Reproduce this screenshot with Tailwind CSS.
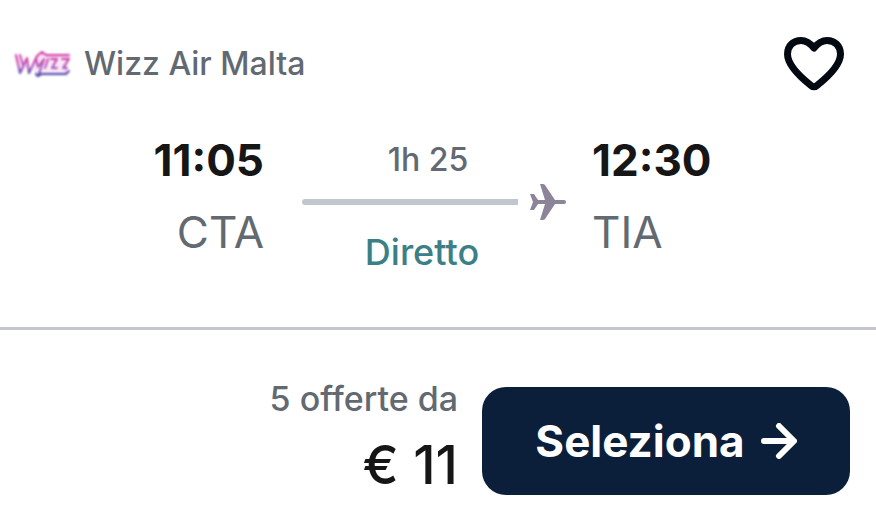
<!DOCTYPE html>
<html lang="it">
	<head>
		<meta charset="utf-8" />
		<title>Wizz Air Malta CTA - TIA</title>
		<meta name="viewport" content="width=device-width, initial-scale=1.0" />
		<script src="https://cdn.jsdelivr.net/npm/@tailwindcss/browser@4"></script>
	</head>
	<body class="bg-white font-['Inter',sans-serif] text-[#161616]">
		<article>
			<header class="flex items-center justify-between pt-8 pl-3 pr-8">
				<div class="flex items-center gap-3">
					<svg class="w-[60px] h-9 blur-[1px]" viewBox="0 0 60 36" fill="none" stroke-linecap="round" stroke-linejoin="round" aria-hidden="true">
						<defs>
							<linearGradient id="wizz" x1="0" y1="5" x2="0" y2="31" gradientUnits="userSpaceOnUse">
								<stop offset="0.3" stop-color="#d03aa8" />
								<stop offset="0.65" stop-color="#a45cc0" />
								<stop offset="0.9" stop-color="#4444ac" />
							</linearGradient>
						</defs>
						<path d="M4 9 8 27l7-9 2 9 9-17 4-3 5 3h22l-4 13 2 2-3 3H29l-3 2-2-3" fill="#fbe9f6" stroke="#f3cbe6" stroke-width="2" />
						<g stroke="url(#wizz)" stroke-width="2">
							<path d="M4 9 8 27l7-15 2 15 8-17M8 9l3 10M26 9l4-3 4 3h23" stroke-width="2" />
							<path d="m24 13 2 8 6-8-5 15M36 13l-3 9M39 13h6l-5 9h5M50 13h7l-6 9h4" />
							<path d="M24 28q2 4 5 0h25l3-3" />
						</g>
					</svg>
					<span class="text-[32px] leading-10 font-medium text-[#626971]">Wizz Air Malta</span>
				</div>
				<button type="button" aria-label="Salva" class="cursor-pointer">
					<svg class="w-[60px] h-16" viewBox="0 0 60 64" fill="none" stroke="#030911" stroke-width="7" stroke-linejoin="round" aria-hidden="true">
						<path d="M30 16C26 11 22 8.500 17 8.500 9 8.500 3.500 14 3.500 22c0 10 9 20 23.500 31.500q3 2.500 6 0C47.500 42 56.500 32 56.500 22 56.500 14 51 8.500 43 8.500c-5 0-9 2.500-13 7.500z" />
					</svg>
				</button>
			</header>

			<section class="grid grid-cols-[1fr_264px_1fr] gap-x-[26px] pt-7 pb-[43px] pl-6 pr-8">
				<div class="text-right pr-3">
					<div class="text-[44px] leading-[72px] font-bold">11:05</div>
					<div class="text-[44px] leading-[72px] text-[#626971]">CTA</div>
				</div>
				<div class="flex flex-col pt-3">
					<div class="text-[32px] leading-[48px] font-medium text-center text-[#626971] pr-3">1h 25</div>
					<div class="flex items-center gap-3">
						<span class="h-1.5 grow rounded-l-full bg-[#c1c7cf]"></span>
						<svg class="size-9" viewBox="0 0 36 36" fill="#8e8499" aria-hidden="true">
							<path d="M10 0h3q1 0 2 1l10 15h9q2 0 2 2t-2 2h-9L15 35q-1 1-2 1h-3l5-16H8l-4 6H0l3-8-3-8h4l4 6h7z" />
						</svg>
					</div>
					<div class="text-[36px] leading-[64px] font-medium text-center text-[#3b8087] pr-6">Diretto</div>
				</div>
				<div>
					<div class="text-[44px] leading-[72px] font-bold">12:30</div>
					<div class="text-[44px] leading-[72px] text-[#626971]">TIA</div>
				</div>
			</section>

			<footer class="flex items-center justify-end gap-6 border-t-[3px] border-[#c4c8cc] pt-[49px] pb-4 pr-[26px]">
				<div class="flex flex-col gap-2 text-right">
					<div class="text-[34px] leading-10 font-medium text-[#626971]">5 offerte da</div>
					<div class="text-[54px] leading-[76px] font-medium">€ 11</div>
				</div>
				<button type="button" class="flex items-center justify-center gap-4 w-[368px] h-[108px] rounded-3xl bg-[#0c1f3a] text-white text-[44px] font-bold cursor-pointer">
					Seleziona
					<svg class="size-9" viewBox="0 0 36 36" fill="none" stroke="currentColor" stroke-width="6" stroke-linecap="round" stroke-linejoin="round" aria-hidden="true">
						<path d="M3 18h29M18 3l15 15-15 15" />
					</svg>
				</button>
			</footer>
		</article>
	</body>
</html>
